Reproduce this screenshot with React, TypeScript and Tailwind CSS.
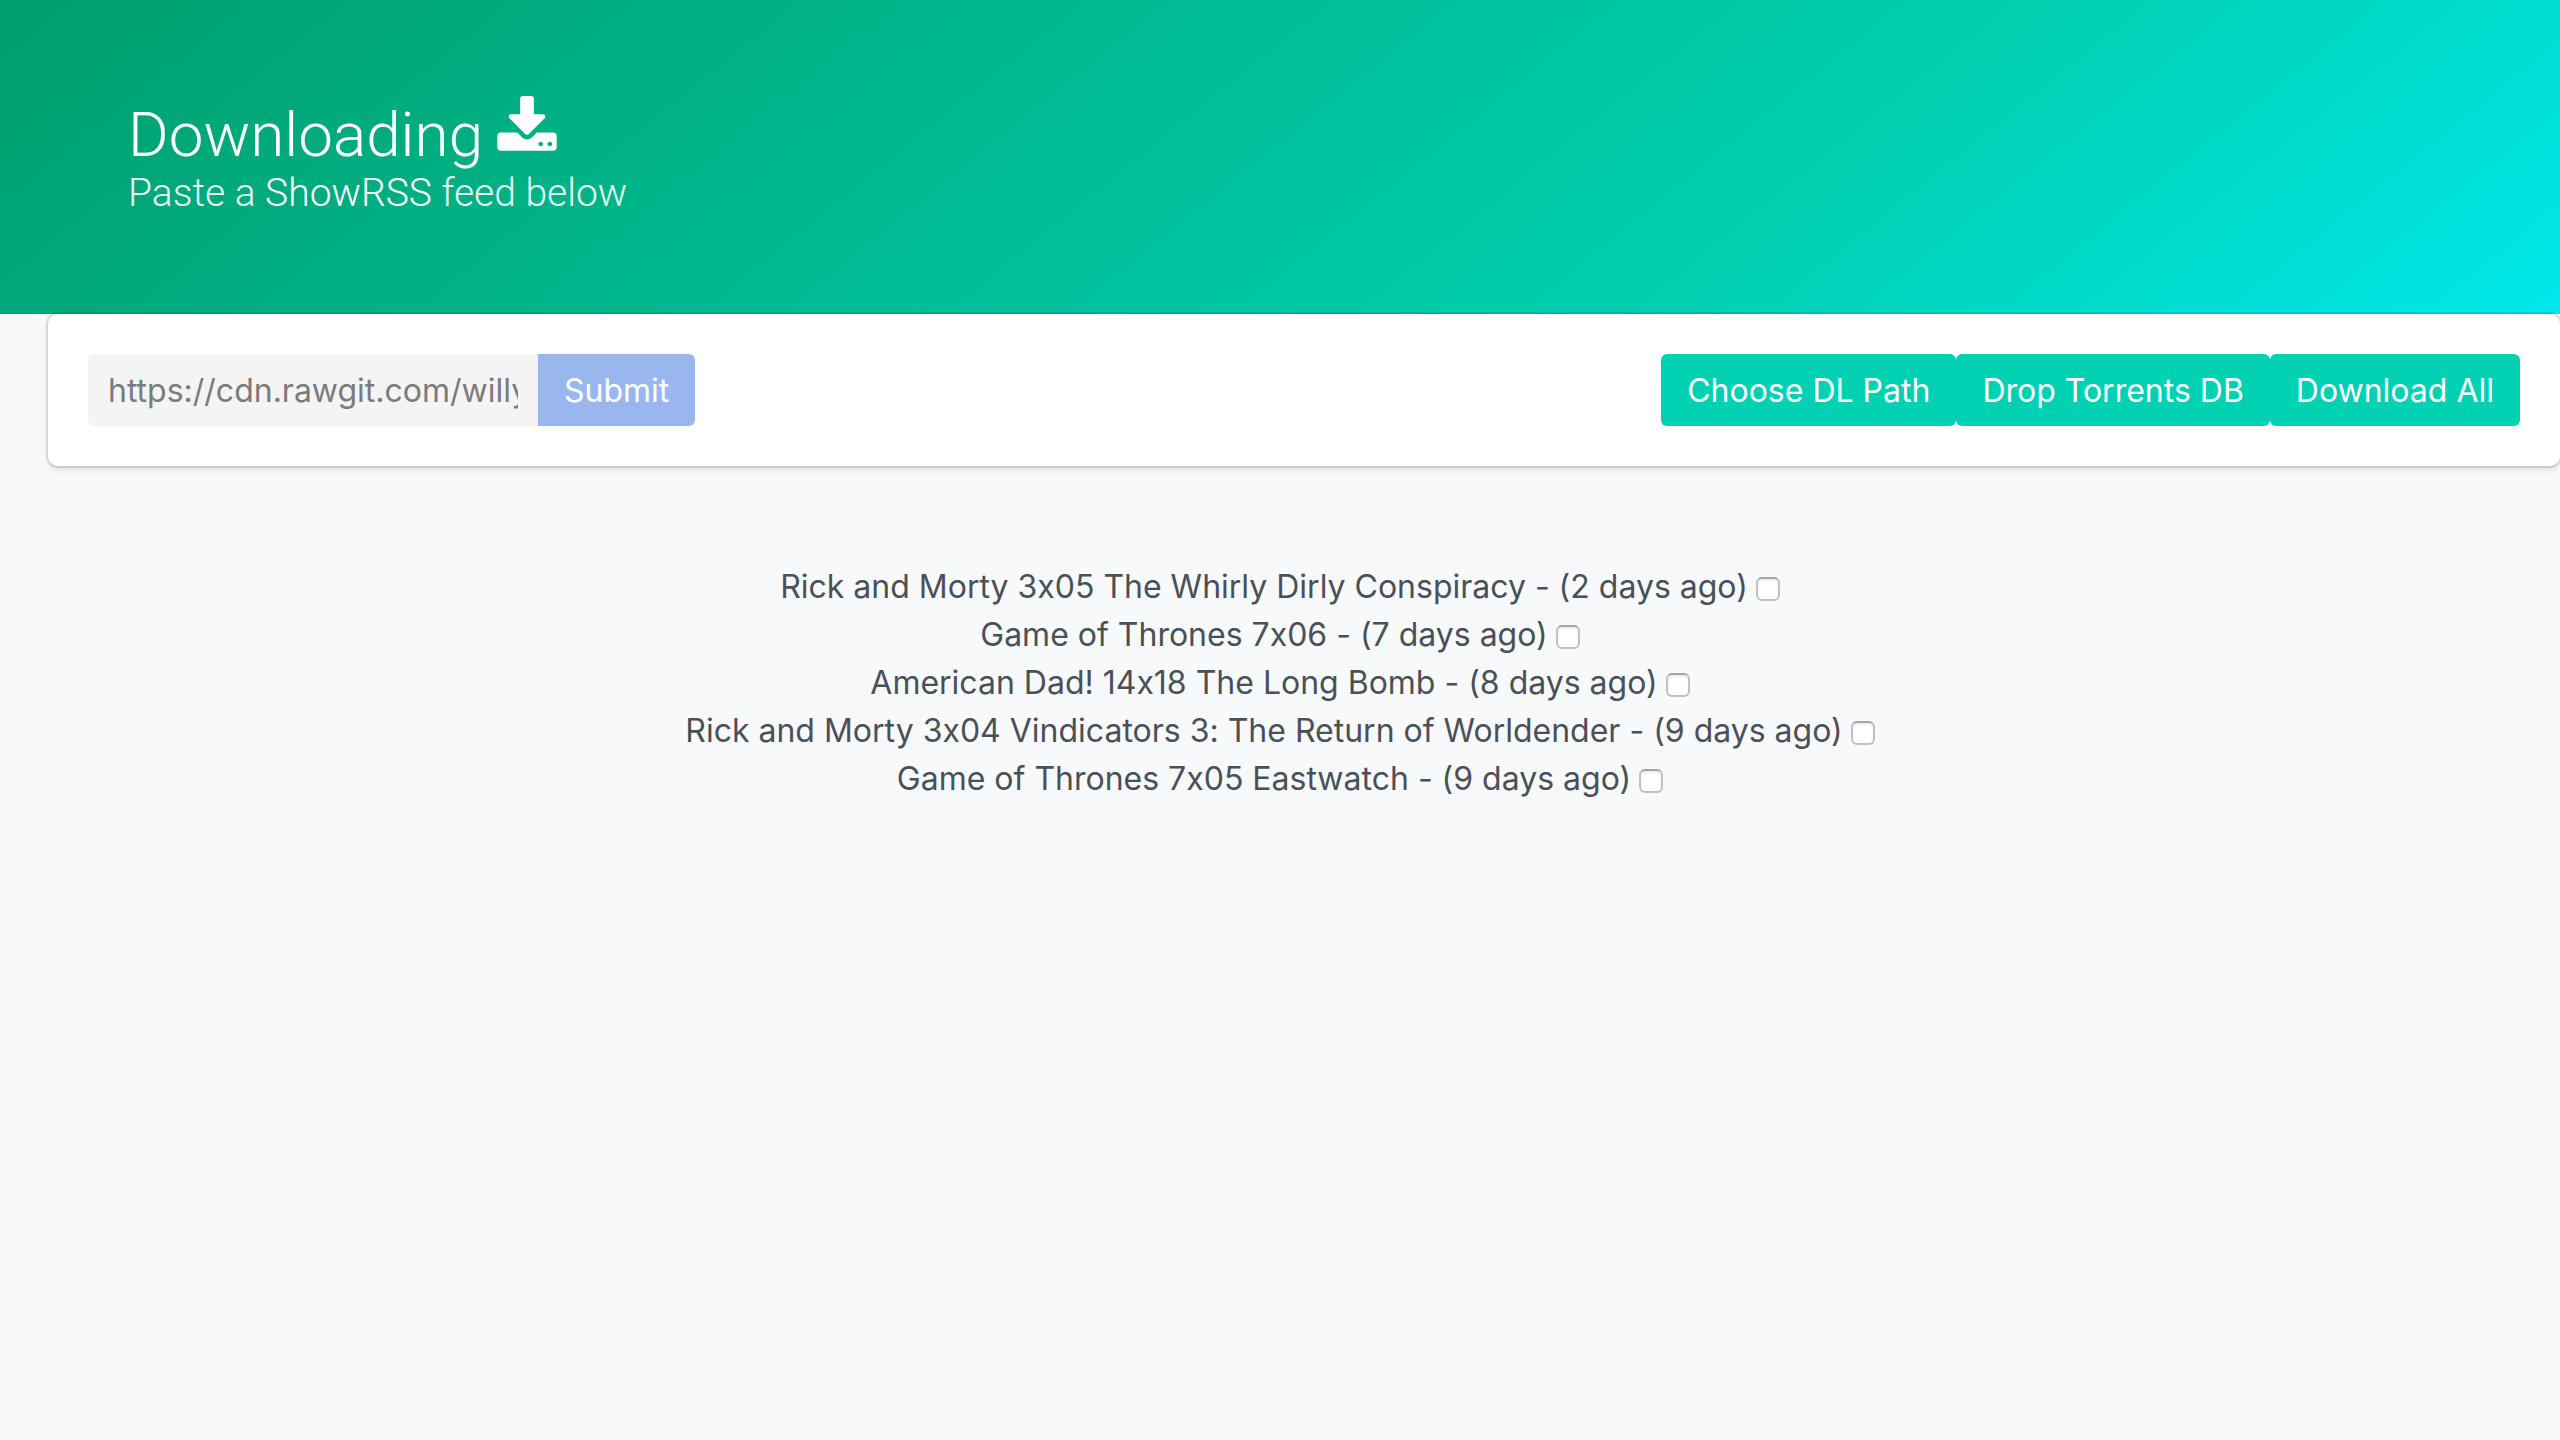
import { useState } from 'react';

const episodes = [
  'Rick and Morty 3x05 The Whirly Dirly Conspiracy - (2 days ago)',
  'Game of Thrones 7x06 - (7 days ago)',
  'American Dad! 14x18 The Long Bomb - (8 days ago)',
  'Rick and Morty 3x04 Vindicators 3: The Return of Worldender - (9 days ago)',
  'Game of Thrones 7x05 Eastwatch - (9 days ago)',
];

const actions = ['Choose DL Path', 'Drop Torrents DB', 'Download All'];

function DownloadIcon() {
  return (
    <svg viewBox="0 0 1792 1792" className="size-16 shrink-0 fill-current" aria-hidden="true">
      <path d="M1344 1344q0-26-19-45t-45-19-45 19-19 45 19 45 45 19 45-19 19-45zm256 0q0-26-19-45t-45-19-45 19-19 45 19 45 45 19 45-19 19-45zm128-224v320q0 40-28 68t-68 28h-1472q-40 0-68-28t-28-68v-320q0-40 28-68t68-28h465l135 136q58 56 136 56t136-56l136-136h464q40 0 68 28t28 68zm-325-569q17 41-14 70l-448 448q-18 19-45 19t-45-19l-448-448q-31-29-14-70 17-39 59-39h256v-448q0-26 19-45t45-19h256q26 0 45 19t19 45v448h256q42 0 59 39z" />
    </svg>
  );
}

export default function App() {
  const [url, setUrl] = useState('');
  return (
    <div className="min-h-screen bg-[#f8f9fb] font-['Inter',sans-serif] text-[32px] leading-[50px] text-[#4a5058] [font-variant-ligatures:no-contextual]">
      <header className="bg-[linear-gradient(141deg,#009e6c_0%,#00d1b2_71%,#00e7eb_100%)] px-32 py-24 font-['Roboto',sans-serif] font-light text-white">
        <h1 className="flex h-[72px] items-start gap-3 text-[62px] leading-[78px] font-light">
          Downloading
          <DownloadIcon />
        </h1>
        <h2 className="text-[39px] leading-[50px] font-light text-white/90">
          Paste a <span className="text-white">ShowRSS</span> feed below
        </h2>
      </header>
      <main>
        <section className="relative ml-12 flex items-center justify-between rounded-[10px] bg-white p-10 shadow-[0_4px_6px_rgba(10,10,10,0.1),0_0_0_2px_rgba(10,10,10,0.1)]">
          <form className="flex" onSubmit={(e) => e.preventDefault()}>
            <input
              type="text"
              aria-label="Feed URL"
              placeholder="https://cdn.rawgit.com/willyb321/feed.xml"
              value={url}
              onChange={(e) => setUrl(e.target.value)}
              className="h-[72px] w-[450px] rounded-l-md bg-[#f4f4f4] px-5 leading-8 outline-none placeholder:text-[#7b7b7b]"
            />
            <button type="submit" className="h-[72px] rounded-r-md bg-[#99b7ee] px-[26px] pt-0.5 text-white">
              Submit
            </button>
          </form>
          <div className="flex">
            {actions.map((label) => (
              <button key={label} type="button" className="h-[72px] rounded-md bg-[#00d1b2] px-[26px] pt-0.5 text-white">
                {label}
              </button>
            ))}
          </div>
        </section>
        <ul className="px-12 pt-24 text-center">
          {episodes.map((title) => (
            <li key={title} className="h-12">
              <label className="inline-flex items-center gap-2">
                {title}
                <input
                  type="checkbox"
                  className="mt-1 size-6 appearance-none rounded-md border-2 border-[#c0c0c0] border-t-[#a4a4a4] bg-white shadow-[inset_0_2px_2px_rgba(0,0,0,0.08)] checked:bg-[#3273dc]"
                />
              </label>
            </li>
          ))}
        </ul>
      </main>
    </div>
  );
}
